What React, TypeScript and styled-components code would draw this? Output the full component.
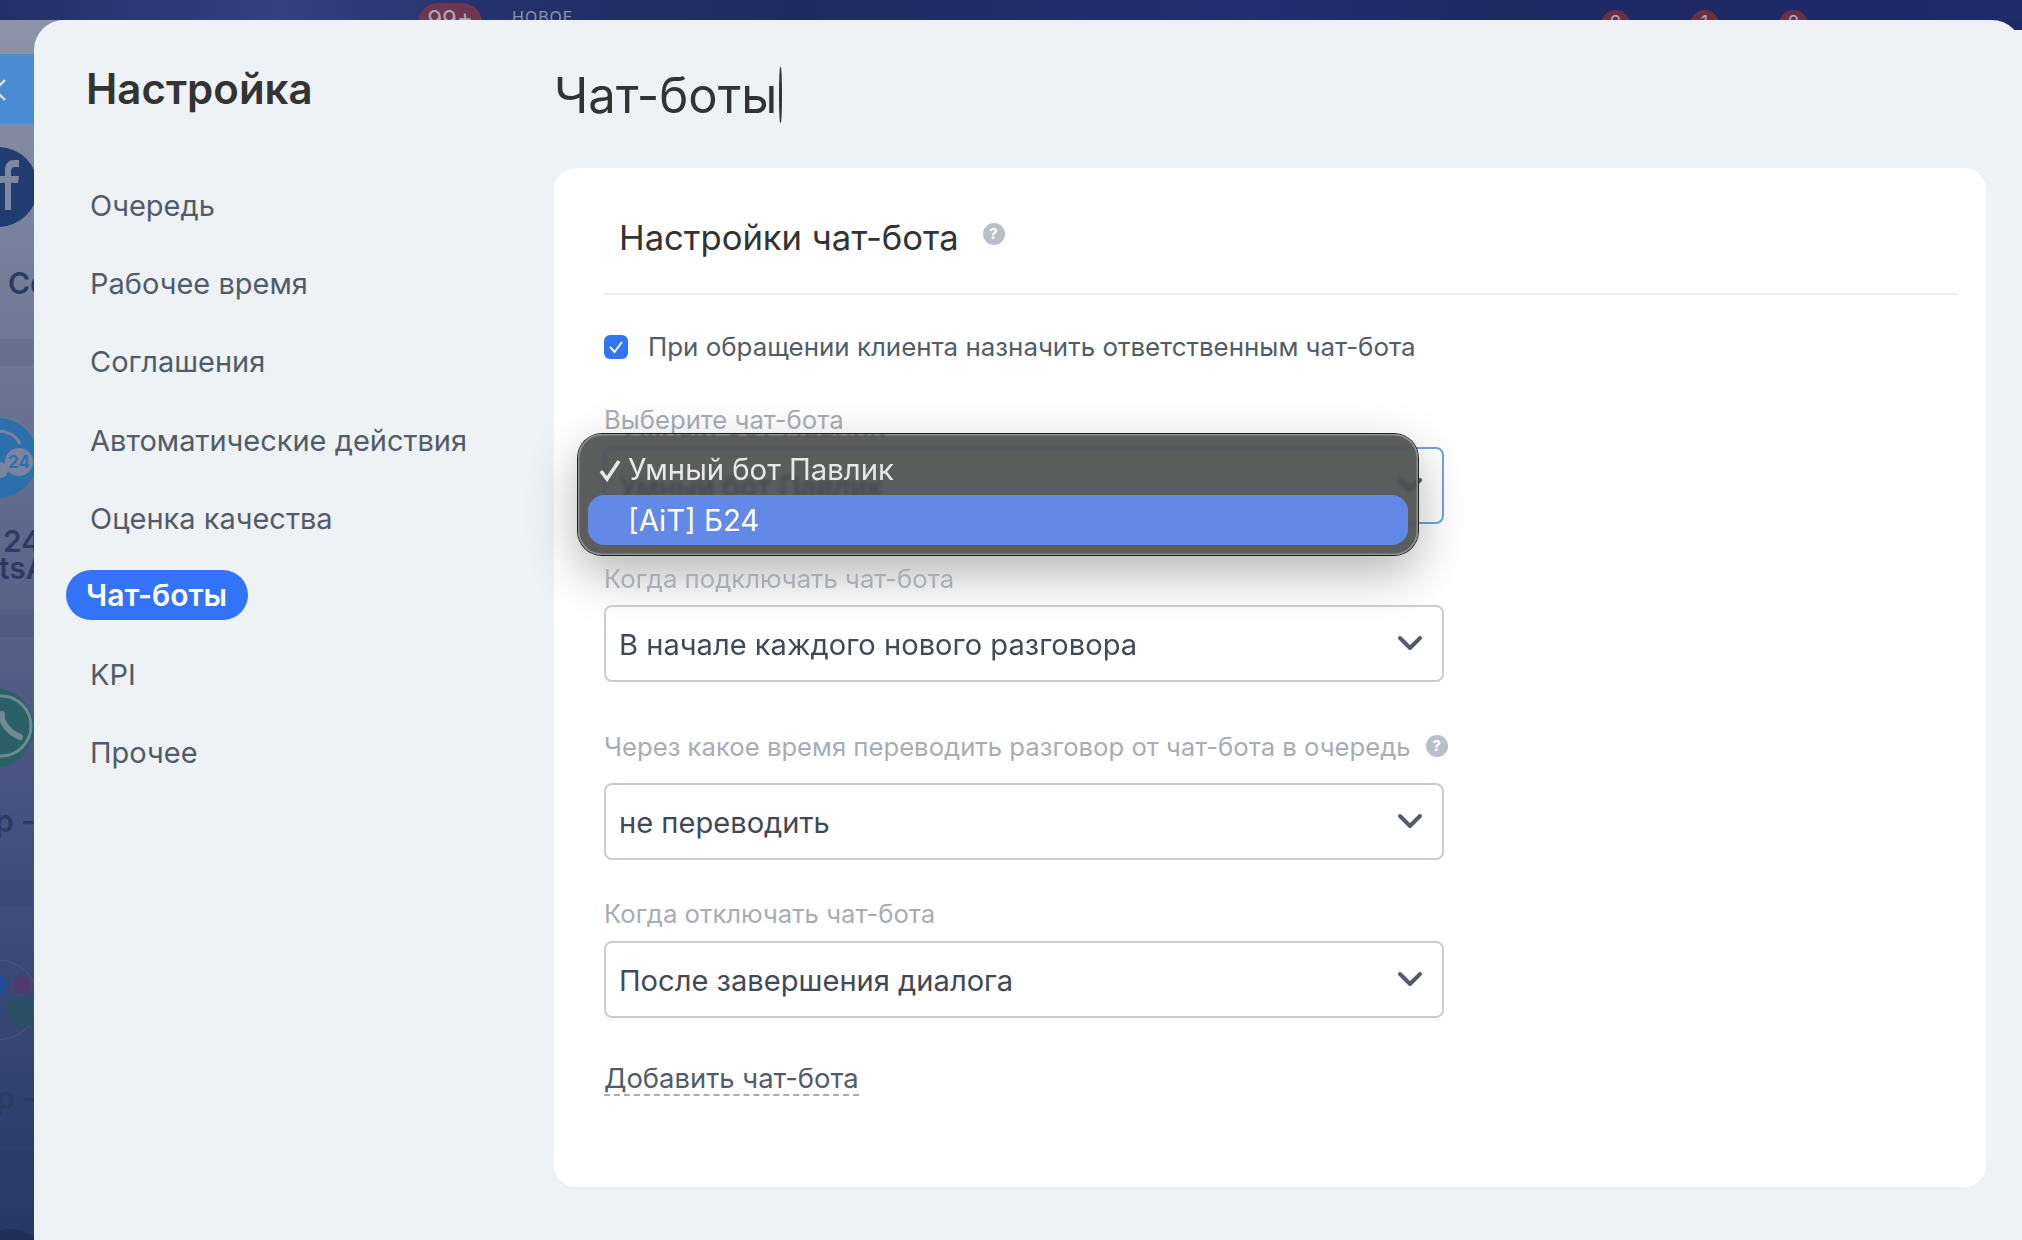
import styled, { createGlobalStyle } from "styled-components";

const GlobalStyle = createGlobalStyle`
  html, body {
    margin: 0;
    height: 100%;
    overflow: hidden;
    font-family: Inter, "Liberation Sans", sans-serif;
  }
  #root {
    height: 100%;
  }
`;

const Page = styled.div`
  position: relative;
  height: 100%;
  overflow: hidden;
  background: #1e2a68;
`;

/* the page behind the slider */
const TopBar = styled.div`
  display: flex;
  align-items: flex-start;
  height: 20px;
  padding: 0 214px 0 418px;
  overflow: hidden;
  background: linear-gradient(
    90deg,
    #232f6a 0,
    #363f80 280px,
    #24306a 520px,
    #1f2b60 800px,
    #242d72 1250px,
    #1e2962 1500px,
    #1e2a6a 2022px
  );
`;

const CounterBadge = styled.span`
  flex: none;
  margin-top: 3px;
  width: 64px;
  height: 40px;
  border-radius: 20px;
  background: #6f3650;
  color: #a9a9b8;
  font-size: 24px;
  line-height: 34px;
  text-align: center;
`;

const NewTag = styled.span`
  margin: 9px 0 0 30px;
  color: #8c92ad;
  font-size: 16px;
  line-height: 16px;
  letter-spacing: 1px;
`;

const Counters = styled.div`
  display: flex;
  gap: 60px;
  margin-left: auto;
`;

const SmallBadge = styled.span`
  width: 29px;
  height: 29px;
  margin-top: 10px;
  border-radius: 50%;
  background: #6e2f45;
  color: #a9a9b8;
  font-size: 18px;
  line-height: 26px;
  text-align: center;
`;

const Strip = styled.div`
  display: flex;
  flex-direction: column;
  width: 70px;
  height: 1220px;
  overflow: hidden;
  background: linear-gradient(180deg, #8c94a9 0, #6a7391 380px, #47537f 780px, #2a3b69 1180px, #263761 1220px);
`;

const StripTab = styled.div`
  flex: none;
  height: 71px;
  margin-top: 34px;
  background: #4a8bd2;
  border-bottom: 2px solid #4f93dc;
  box-sizing: border-box;
  svg {
    display: block;
    margin-top: 24px;
  }
`;

const Tile = styled.div<{ $height: number; $pad: number }>`
  flex: none;
  height: ${(p) => p.$height}px;
  padding-top: ${(p) => p.$pad}px;
  box-sizing: border-box;
  svg {
    display: block;
  }
`;

const TileBand = styled.div`
  flex: none;
  height: 27px;
  background: rgba(30, 42, 90, 0.08);
`;

const Caption = styled.div<{ $top: number; $shift: number }>`
  margin: ${(p) => p.$top}px 0 0 ${(p) => p.$shift}px;
  color: #2c3b64;
  font-size: 30px;
  font-weight: 600;
  line-height: 27px;
  white-space: nowrap;
`;

/* the slider itself */
const Panel = styled.div`
  position: absolute;
  top: 20px;
  left: 34px;
  right: 0;
  bottom: 0;
  display: flex;
  border-radius: 30px 30px 0 0;
  background: #eef2f5;
  &::after {
    content: "";
    position: absolute;
    top: 10px;
    right: 0;
    bottom: 0;
    width: 8px;
    background: #eef2f5;
  }
`;

const Sidebar = styled.aside`
  flex: none;
  width: 520px;
  box-sizing: border-box;
  padding: 37px 0 0 32px;
`;

const SidebarTitle = styled.h2`
  margin: 0 0 0 20px;
  color: #333;
  font-size: 42px;
  font-weight: 600;
  line-height: 64px;
`;

const Menu = styled.nav`
  display: flex;
  flex-direction: column;
  align-items: flex-start;
  margin-top: 46px;
`;

const MenuItem = styled.a<{ $active?: boolean }>`
  display: flex;
  align-items: center;
  height: 78.2px;
  margin-left: ${(p) => (p.$active ? 0 : 2)}px;
  color: ${(p) => (p.$active ? "#fff" : "#525c69")};
  font-size: ${(p) => (p.$active ? 30 : 29)}px;
  font-weight: ${(p) => (p.$active ? 600 : 400)};
  white-space: nowrap;
  span {
    margin-top: ${(p) => (p.$active ? -4 : 0)}px;
    padding: 0 ${(p) => (p.$active ? 21 : 22)}px 0 ${(p) => (p.$active ? 20 : 22)}px;
    line-height: 50px;
    border-radius: 25px;
    background: ${(p) => (p.$active ? "#3373f8" : "transparent")};
  }
`;

const Main = styled.main`
  flex: 1;
  min-width: 0;
  padding-top: 40px;
`;

const Heading = styled.h1`
  display: flex;
  align-items: center;
  height: 70px;
  margin: 0;
  color: #333;
  font-size: 49px;
  font-weight: 400;
`;

const TextCursor = styled.i`
  width: 2.5px;
  height: 56px;
  margin-left: 2px;
  border-radius: 50%;
  background: #333;
`;

const Card = styled.section`
  box-sizing: border-box;
  width: 1432px;
  height: 1019px;
  margin-top: 38px;
  padding: 0 28px 0 50px;
  border-radius: 22px;
  background: #fff;
`;

const CardHeader = styled.div`
  display: flex;
  align-items: center;
  height: 125px;
  padding-left: 15px;
  border-bottom: 2px solid #edeef0;
`;

const CardTitle = styled.h3`
  margin: 0 24px 0 0;
  color: #333;
  font-size: 34.6px;
  font-weight: 400;
  position: relative;
  top: 6px;
`;

const Help = styled.span<{ $top?: number }>`
  flex: none;
  position: relative;
  top: ${(p) => p.$top ?? 0}px;
  width: 22px;
  height: 22px;
  border-radius: 50%;
  background: #b9bfc9;
  color: #fff;
  font-size: 15px;
  font-weight: 700;
  line-height: 22px;
  text-align: center;
`;

const CheckRow = styled.label`
  display: flex;
  align-items: center;
  gap: 20px;
  margin-top: 40px;
  color: #525c69;
  font-size: 25.9px;
  line-height: 24px;
`;

const CheckBox = styled.span`
  flex: none;
  display: flex;
  align-items: center;
  justify-content: center;
  width: 24px;
  height: 24px;
  border-radius: 6px;
  background: #3373f8;
`;

const Field = styled.div<{ $top: number }>`
  position: relative;
  width: 840px;
  margin-top: ${(p) => p.$top}px;
`;

const FieldLabel = styled.div<{ $gap: number }>`
  display: flex;
  align-items: center;
  gap: 15px;
  height: 32px;
  margin-bottom: ${(p) => p.$gap}px;
  color: #a8adb4;
  font-size: 25.7px;
  white-space: nowrap;
`;

const Select = styled.div<{ $open?: boolean }>`
  display: flex;
  align-items: center;
  justify-content: space-between;
  box-sizing: border-box;
  height: 77px;
  padding: 2px 19px 0 13px;
  border: 2px solid ${(p) => (p.$open ? "#6ba6e2" : "#c8ccd3")};
  border-radius: 8px;
  color: #424956;
  font-size: 29.1px;
  svg {
    position: relative;
    top: -2px;
  }
`;

const Dropdown = styled.div`
  position: absolute;
  top: 31px;
  left: -26px;
  width: 840px;
  height: 121px;
  box-sizing: border-box;
  padding: 14px 10px 0 10px;
  overflow: hidden;
  border-radius: 24px;
  background: rgba(68, 69, 69, 0.88);
  backdrop-filter: blur(2px);
  box-shadow: inset 0 0 0 1.5px #8f8f8f, 0 0 0 1px #222, 0 18px 50px rgba(0, 0, 0, 0.3);
  /* the blurred reflection of the text under the menu */
  &::before {
    content: "Умный бот Павлик";
    position: absolute;
    top: -26px;
    left: 44px;
    color: rgba(30, 30, 30, 0.4);
    font-size: 29px;
    filter: blur(1px);
  }
`;

const Option = styled.div<{ $active?: boolean }>`
  display: flex;
  align-items: center;
  box-sizing: border-box;
  height: ${(p) => (p.$active ? 50 : 47)}px;
  padding: 0 0 ${(p) => (p.$active ? 0 : 4)}px 40px;
  position: relative;
  border-radius: 16px;
  background: ${(p) => (p.$active ? "#6289e5" : "transparent")};
  color: ${(p) => (p.$active ? "#fff" : "#e8e8e8")};
  font-size: 29.3px;
  svg {
    position: absolute;
    left: 10px;
    top: 10px;
  }
`;

const AddLink = styled.a`
  display: inline-block;
  margin-top: 44px;
  color: #525c69;
  font-size: 27.4px;
  line-height: 32px;
  border-bottom: 2px dashed #a8adb4;
`;

const menu = [
  "Очередь",
  "Рабочее время",
  "Соглашения",
  "Автоматические действия",
  "Оценка качества",
  "Чат-боты",
  "KPI",
  "Прочее",
];

const Chevron = () => (
  <svg width="26" height="16" viewBox="0 0 26 16" fill="none">
    <path d="M3 3 L13 13 L23 3" stroke="#535c69" strokeWidth="4" strokeLinecap="round" strokeLinejoin="round" />
  </svg>
);

const App = () => (
  <Page>
    <GlobalStyle />
    <TopBar>
      <CounterBadge>99+</CounterBadge>
      <NewTag>НОВОЕ</NewTag>
      <Counters>
        <SmallBadge>9</SmallBadge>
        <SmallBadge>1</SmallBadge>
        <SmallBadge>9</SmallBadge>
      </Counters>
    </TopBar>

    <Strip>
      <StripTab>
        <svg width="10" height="24" viewBox="0 0 10 24" fill="none">
          <path d="M5 2 L-5 12 L5 22" stroke="#d5e2f2" strokeWidth="2.4" />
        </svg>
      </StripTab>
      <Tile $height={214} $pad={22}>
        <svg width="70" height="80" viewBox="0 0 70 80">
          <circle cx="-2" cy="40" r="40" fill="#213c71" />
          <path d="M5 63 V36 H-3 V29 H5 V24 C5 16 9 13 14 13 L19 13 V20 H15 C12 20 11 22 11 24 V29 H19 L18 36 H11 V63 Z" fill="#7f88a0" />
        </svg>
        <Caption $top={43} $shift={8}>Co</Caption>
      </Tile>
      <TileBand />
      <Tile $height={244} $pad={52}>
        <svg width="70" height="80" viewBox="0 0 70 80">
          <circle cx="-2" cy="40" r="40" fill="#2b70ac" />
          <path d="M-8 14 C6 11 16 17 20 26" stroke="#7a84a0" strokeWidth="3" fill="none" />
          <circle cx="19" cy="44" r="14" fill="#7a84a0" />
          <circle cx="0" cy="52" r="8" fill="#7a84a0" />
          <text x="19" y="50" textAnchor="middle" fontFamily="Inter" fontWeight="700" fontSize="17" fill="#2b70ac">24</text>
        </svg>
        <Caption $top={30} $shift={3}>24</Caption>
        <Caption $top={0} $shift={-1}>tsA</Caption>
      </Tile>
      <TileBand />
      <Tile $height={243} $pad={51}>
        <svg width="70" height="80" viewBox="0 0 70 80">
          <circle cx="-6" cy="40" r="40" fill="#2a6066" />
          <circle cx="1" cy="38" r="30" fill="none" stroke="#6f8a93" strokeWidth="3" />
          <path d="M2 26 C1 34 8 44 20 49" stroke="#6f8a93" strokeWidth="6" fill="none" strokeLinecap="round" />
        </svg>
        <Caption $top={40} $shift={-5}>p -</Caption>
      </Tile>
      <TileBand />
      <Tile $height={243} $pad={53}>
        <svg width="70" height="80" viewBox="0 0 70 80">
          <circle cx="-2" cy="40" r="40" fill="none" stroke="#4a5680" strokeWidth="1" />
          <circle cx="-4" cy="25" r="11" fill="#1f4f96" />
          <circle cx="22" cy="25" r="9" fill="#4f3a70" />
          <circle cx="22" cy="52" r="15" fill="#2b4f64" />
          <circle cx="-3" cy="52" r="4" fill="#1f4f96" />
        </svg>
        <Caption $top={45} $shift={-22}>op -</Caption>
      </Tile>
      <TileBand />
      <Tile $height={100} $pad={52}>
        <svg width="70" height="80" viewBox="0 0 70 80">
          <circle cx="10" cy="40" r="40" fill="#1f2e55" />
        </svg>
      </Tile>
    </Strip>

    <Panel>
      <Sidebar>
        <SidebarTitle>Настройка</SidebarTitle>
        <Menu>
          {menu.map((item) => (
            <MenuItem key={item} $active={item === "Чат-боты"}>
              <span>{item}</span>
            </MenuItem>
          ))}
        </Menu>
      </Sidebar>

      <Main>
        <Heading>
          Чат-боты
          <TextCursor />
        </Heading>
        <Card>
          <CardHeader>
            <CardTitle>Настройки чат-бота</CardTitle>
            <Help $top={3}>?</Help>
          </CardHeader>

          <CheckRow>
            <CheckBox>
              <svg width="16" height="14" viewBox="0 0 16 14" fill="none">
                <path d="M2 7 L6.5 12 L14 2" stroke="#fff" strokeWidth="2" />
              </svg>
            </CheckBox>
            При обращении клиента назначить ответственным чат-бота
          </CheckRow>

          <Field $top={44}>
            <FieldLabel $gap={12}>Выберите чат-бота</FieldLabel>
            <Select $open>
              Умный бот Павлик
              <Chevron />
            </Select>
            <Dropdown>
              <Option>
                <svg width="24" height="24" viewBox="0 0 24 24" fill="none">
                  <path d="M3 13 L9 21 L21 3" stroke="#e8e8e8" strokeWidth="3.6" />
                </svg>
                Умный бот Павлик
              </Option>
              <Option $active>[AiT] Б24</Option>
            </Dropdown>
          </Field>

          <Field $top={38}>
            <FieldLabel $gap={11}>Когда подключать чат-бота</FieldLabel>
            <Select>
              В начале каждого нового разговора
              <Chevron />
            </Select>
          </Field>

          <Field $top={48}>
            <FieldLabel $gap={21}>
              Через какое время переводить разговор от чат-бота в очередь
              <Help>?</Help>
            </FieldLabel>
            <Select>
              не переводить
              <Chevron />
            </Select>
          </Field>

          <Field $top={37}>
            <FieldLabel $gap={12}>Когда отключать чат-бота</FieldLabel>
            <Select>
              После завершения диалога
              <Chevron />
            </Select>
          </Field>

          <AddLink>Добавить чат-бота</AddLink>
        </Card>
      </Main>
    </Panel>
  </Page>
);

export default App;
